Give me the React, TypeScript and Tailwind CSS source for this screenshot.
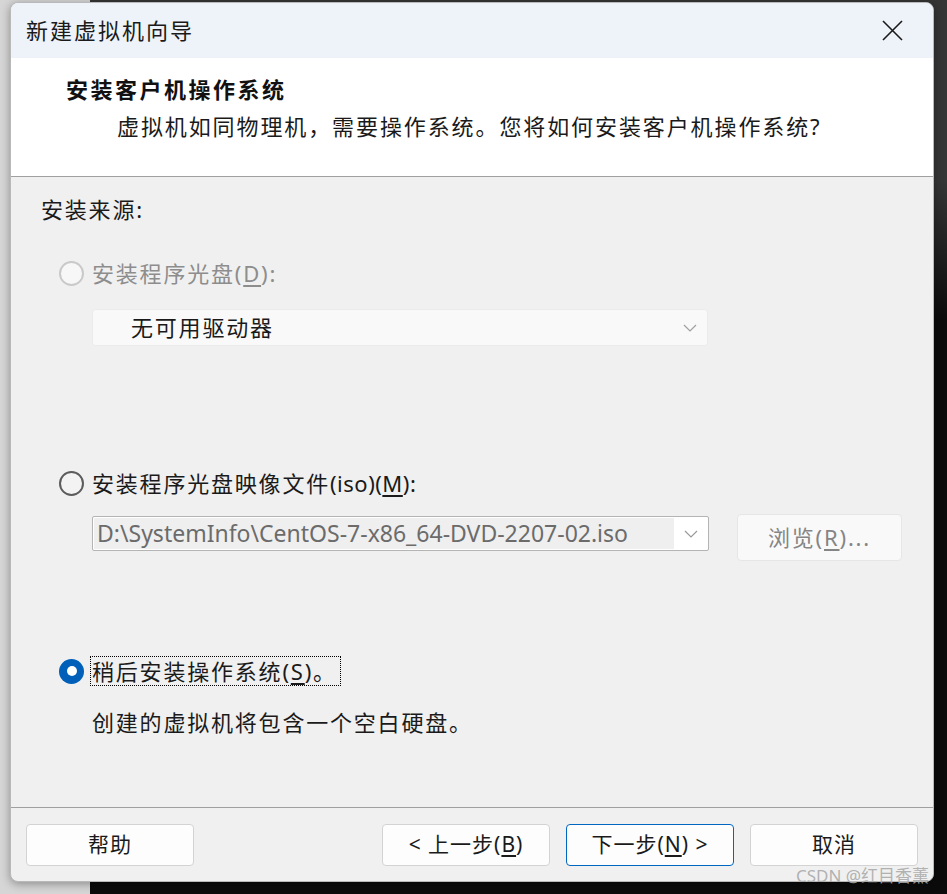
import React from 'react';

const cjk = { fontFamily: '"Noto Sans", "Noto Sans CJK SC", sans-serif' };

function Chevron({ color = '#8c8c8c' }: { color?: string }) {
  return (
    <svg width="14" height="8" viewBox="0 0 14 8" fill="none">
      <polyline points="1,1 7,7 13,1" stroke={color} strokeWidth="1.2" />
    </svg>
  );
}

function Radio({ state }: { state: 'disabled' | 'off' | 'on' }) {
  if (state === 'on') {
    return (
      <span className="flex h-[25px] w-[25px] shrink-0 items-center justify-center rounded-full bg-[#005fb8]">
        <span className="h-[10px] w-[10px] rounded-full bg-white" />
      </span>
    );
  }
  return (
    <span
      className={
        state === 'disabled'
          ? 'h-[25px] w-[25px] shrink-0 rounded-full border-2 border-[#c9c9c9] bg-[#f7f7f7]'
          : 'h-[25px] w-[25px] shrink-0 rounded-full border-2 border-[#5c5c5c] bg-[#f3f3f3]'
      }
    />
  );
}

function Button({ children, primary }: { children: React.ReactNode; primary?: boolean }) {
  return (
    <button
      className={
        primary
          ? 'flex h-[42px] w-[168px] items-center justify-center rounded-[4px] border border-[#0067c0] bg-[#fdfdfd] text-[21px] tracking-[1px] text-[#1a1a1a]'
          : 'flex h-[42px] w-[168px] items-center justify-center rounded-[4px] border border-[#d3d3d3] bg-[#fdfdfd] text-[21px] tracking-[1px] text-[#1a1a1a]'
      }
      style={cjk}
    >
      {children}
    </button>
  );
}

export default function App() {
  return (
    <div
      className="relative h-[894px] w-[947px] overflow-hidden bg-[linear-gradient(to_right,#d6d6d6_90px,transparent_90px),linear-gradient(to_bottom,#353535_180px,#0b0b0b_320px)] pl-[10px] pt-[2px]"
      style={cjk}
    >
      <div className="flex h-[880px] w-[924px] flex-col overflow-hidden rounded-[8px] border border-[#b9b9b9] bg-[#f0f0f0] shadow-[0_2px_10px_rgba(0,0,0,0.35)]">
        {/* title bar */}
        <div className="flex h-[55px] shrink-0 items-center justify-between bg-[#eef3f9] pl-[15px] pr-[30px]">
          <span className="text-[22px] tracking-[2px] text-[#1a1a1a]">新建虚拟机向导</span>
          <svg width="21" height="21" viewBox="0 0 21 21">
            <path d="M1 1 L20 20 M20 1 L1 20" stroke="#1a1a1a" strokeWidth="1.6" />
          </svg>
        </div>

        {/* header */}
        <div className="flex h-[119px] shrink-0 flex-col border-b border-[#a0a0a0] bg-white pt-[16px]">
          <div className="pl-[55px] text-[22px] font-bold leading-[30px] tracking-[2.5px] text-[#111]">
            安装客户机操作系统
          </div>
          <div className="mt-[7px] pl-[106px] text-[22px] leading-[30px] tracking-[1.9px] text-[#1a1a1a]">
            虚拟机如同物理机，需要操作系统。您将如何安装客户机操作系统?
          </div>
        </div>

        {/* body */}
        <div className="flex flex-1 flex-col border-b border-[#a0a0a0] pl-[30px] text-[22px] tracking-[1.8px]">
          <div className="mt-[17px] h-[30px] leading-[30px] text-[#1a1a1a]">安装来源:</div>

          <div className="ml-[18px] mt-[34px] flex h-[30px] items-center gap-[8px]">
            <Radio state="disabled" />
            <span className="text-[#8d8d8d]">
              安装程序光盘(<u className="underline-offset-[3px]">D</u>):
            </span>
          </div>

          <div className="ml-[51px] mt-[21px] flex h-[37px] w-[616px] items-center justify-between rounded-[3px] border border-[#ebebeb] bg-[#f9f9f9] pl-[38px] pr-[10px]">
            <span className="text-[#1a1a1a]">无可用驱动器</span>
            <Chevron color="#a0a0a0" />
          </div>

          <div className="ml-[18px] mt-[122px] flex h-[30px] items-center gap-[8px]">
            <Radio state="off" />
            <span className="text-[#1a1a1a]">
              安装程序光盘映像文件<span className="tracking-[0.5px]">(iso)(<u className="underline-offset-[3px]">M</u>):</span>
            </span>
          </div>

          <div className="ml-[51px] mt-[16px] flex items-start gap-[28px]">
            <div className="mt-[2px] flex h-[35px] w-[617px] items-center rounded-[2px] border border-[#b4b4b4] bg-white p-[1px]">
              <div className="flex h-full w-[580px] items-center overflow-hidden whitespace-nowrap bg-[#efefef] pl-[3px] text-[23px] tracking-normal text-[#6b6b6b]">
                D:\SystemInfo\CentOS-7-x86_64-DVD-2207-02.iso
              </div>
              <div className="flex flex-1 items-center justify-center">
                <Chevron color="#9a9a9a" />
              </div>
            </div>
            <div className="flex h-[47px] w-[165px] items-center justify-center rounded-[4px] border border-[#e6e6e6] bg-[#f9f9f9] text-[#858585]">
              浏览(<u className="underline-offset-[3px]">R</u>)...
            </div>
          </div>

          <div className="ml-[18px] mt-[95px] flex h-[30px] items-center gap-[6px]">
            <Radio state="on" />
            <span className="border border-dotted border-black pl-[1px] pr-[3px] leading-[28px] text-[#1a1a1a]">
              稍后安装操作系统(<u className="underline-offset-[3px]">S</u>)。
            </span>
          </div>

          <div className="ml-[51px] mt-[21px] h-[30px] leading-[30px] text-[#1a1a1a]">
            创建的虚拟机将包含一个空白硬盘。
          </div>
        </div>

        {/* footer */}
        <div className="flex h-[73px] shrink-0 items-start justify-between px-[15px] pt-[16px]">
          <Button>帮助</Button>
          <div className="flex gap-[16px]">
            <Button>
              &lt; 上一步(<u className="underline-offset-[3px]">B</u>)
            </Button>
            <Button primary>
              下一步(<u className="underline-offset-[3px]">N</u>) &gt;
            </Button>
            <Button>取消</Button>
          </div>
        </div>
      </div>

      <span className="absolute left-[796px] top-[863px] text-[17px] text-[#a9a9a9]/90" style={cjk}>
        CSDN @红目香薰
      </span>
    </div>
  );
}
